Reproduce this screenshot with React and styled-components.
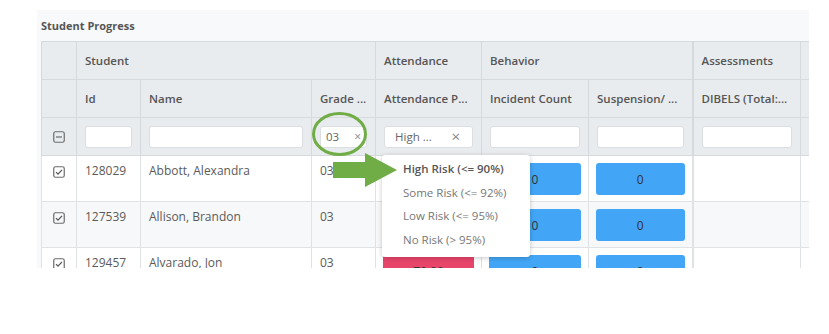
import React from 'react'
import styled, { createGlobalStyle } from 'styled-components'

const Global = createGlobalStyle`
  body {
    margin: 0;
    background: #fff;
    font-family: "Open Sans", "Liberation Sans", sans-serif;
    color: #555;
  }
`

const Page = styled.div`
  width: 829px;
  height: 334px;
  padding: 10px 0 0 37px;
  box-sizing: border-box;
`

const Panel = styled.section`
  width: 772px;
  background: #f8f9fa;
  position: relative;
`

const Title = styled.div`
  height: 31px;
  padding-left: 4px;
  display: flex;
  align-items: center;
  font-size: 11px;
  font-weight: 700;
  color: #555;
`

const TableWrap = styled.div`
  height: 227px;
  margin-left: 4px;
  overflow: hidden;
  position: relative;
`

const Table = styled.table`
  border-collapse: collapse;
  table-layout: fixed;
  width: 810px;
  font-size: 12px;
`

const Th = styled.th`
  height: 38px;
  box-sizing: border-box;
  padding: 0 8px;
  background: #e9ecef;
  border: 1px solid #d6dadd;
  border-right-width: ${p => (p.$group ? '2px' : '1px')};
  text-align: left;
  font-size: 11.5px;
  font-weight: 600;
  color: #555;
  white-space: nowrap;
  overflow: hidden;
`

const FilterCell = styled.td`
  height: 38px;
  box-sizing: border-box;
  padding: 0 8px;
  background: #e9ecef;
  border: 1px solid #d6dadd;
  border-right-width: ${p => (p.$group ? '2px' : '1px')};
  text-align: ${p => (p.$center ? 'center' : 'left')};
`

const Input = styled.div`
  height: 22px;
  box-sizing: border-box;
  background: #fff;
  border: 1px solid #dcdfe2;
  border-radius: 3px;
  display: flex;
  align-items: center;
  justify-content: space-between;
  padding: 0 ${p => (p.$wide ? '12px' : '5px')} 0 ${p => (p.$wide ? '10px' : '5px')};
  font-size: 11.5px;
  color: #666;
`

const Clear = styled.span`
  color: #888;
  font-size: ${p => (p.$big ? '15px' : '12px')};
  line-height: 1;
`

const Row = styled.tr`
  background: ${p => (p.$alt ? '#f7f8f9' : '#fff')};
`

const Td = styled.td`
  height: 46px;
  box-sizing: border-box;
  padding: ${p => (p.$box ? '7px 7px 0' : '6px 8px 0')};
  border: 1px solid #e0e3e6;
  border-right-width: ${p => (p.$group ? '2px' : '1px')};
  vertical-align: top;
  text-align: ${p => (p.$center ? 'center' : 'left')};
  color: #5a5a5a;
  white-space: nowrap;
`

const Score = styled.div`
  height: 32px;
  border-radius: 3px;
  background: ${p => p.$bg};
  display: flex;
  align-items: center;
  justify-content: center;
  color: #333;
  font-size: 12px;
`

const Dropdown = styled.ul`
  position: absolute;
  left: 341px;
  top: 114px;
  width: 148px;
  height: 102px;
  margin: 0;
  padding: 2px 0 0;
  box-sizing: border-box;
  list-style: none;
  background: #fff;
  border-radius: 3px;
  box-shadow: 0 1px 5px rgba(0, 0, 0, 0.22);
  z-index: 3;
`

const Option = styled.li`
  height: 23.5px;
  display: flex;
  align-items: center;
  padding-left: 21px;
  font-size: 11.5px;
  font-weight: ${p => (p.$active ? 600 : 400)};
  color: ${p => (p.$active ? '#555' : '#777')};
`

const Annotation = styled.svg`
  position: absolute;
  left: 0;
  top: 0;
  pointer-events: none;
  z-index: 4;
`

const CheckBox = ({ minus }) => (
  <svg width="12" height="12" viewBox="0 0 12 12" style={{ display: 'block', margin: '0 auto' }}>
    <rect x="0.75" y="0.75" width="10.5" height="10.5" rx="1.8" fill="none" stroke="#6b6b6b" strokeWidth="1.2" />
    {minus ? (
      <path d="M3 6h6" stroke="#6b6b6b" strokeWidth="1.2" />
    ) : (
      <path d="M3 6.2l2 2 4-4.4" fill="none" stroke="#555" strokeWidth="1.2" />
    )}
  </svg>
)

const students = [
  { id: '128029', name: 'Abbott, Alexandra', grade: '03', att: '95.00', attBg: '#42a5f5' },
  { id: '127539', name: 'Allison, Brandon', grade: '03', att: '96.00', attBg: '#42a5f5' },
  { id: '129457', name: 'Alvarado, Jon', grade: '03', att: '70.00', attBg: '#e8456b' },
]

const risks = ['High Risk (<= 90%)', 'Some Risk (<= 92%)', 'Low Risk (<= 95%)', 'No Risk (> 95%)']

export default function App() {
  return (
    <Page>
      <Global />
      <Panel>
        <Title>Student Progress</Title>
        <TableWrap>
          <Table>
            <colgroup>
              <col style={{ width: 35 }} />
              <col style={{ width: 64 }} />
              <col style={{ width: 171 }} />
              <col style={{ width: 64 }} />
              <col style={{ width: 106 }} />
              <col style={{ width: 107 }} />
              <col style={{ width: 104 }} />
              <col style={{ width: 108 }} />
              <col style={{ width: 51 }} />
            </colgroup>
            <thead>
              <tr>
                <Th />
                <Th colSpan={3}>Student</Th>
                <Th>Attendance</Th>
                <Th colSpan={2} $group>Behavior</Th>
                <Th>Assessments</Th>
                <Th />
              </tr>
              <tr>
                <Th />
                <Th>Id</Th>
                <Th>Name</Th>
                <Th>Grade ...</Th>
                <Th>Attendance P...</Th>
                <Th>Incident Count</Th>
                <Th $group>Suspension/ ...</Th>
                <Th>DIBELS (Total:...</Th>
                <Th />
              </tr>
              <tr>
                <FilterCell $center><CheckBox minus /></FilterCell>
                <FilterCell><Input /></FilterCell>
                <FilterCell><Input /></FilterCell>
                <FilterCell><Input>03<Clear>×</Clear></Input></FilterCell>
                <FilterCell><Input $wide>High ...<Clear $big>×</Clear></Input></FilterCell>
                <FilterCell><Input /></FilterCell>
                <FilterCell $group><Input /></FilterCell>
                <FilterCell><Input /></FilterCell>
                <FilterCell />
              </tr>
            </thead>
            <tbody>
              {students.map((s, i) => (
                <Row key={s.id} $alt={i % 2 === 1}>
                  <Td $center style={{ paddingTop: 10 }}><CheckBox /></Td>
                  <Td>{s.id}</Td>
                  <Td>{s.name}</Td>
                  <Td>{s.grade}</Td>
                  <Td $box><Score $bg={s.attBg}>{s.att}</Score></Td>
                  <Td $box><Score $bg="#42a5f5">0</Score></Td>
                  <Td $box $group><Score $bg="#42a5f5">0</Score></Td>
                  <Td />
                  <Td />
                </Row>
              ))}
            </tbody>
          </Table>
          <Dropdown>
            {risks.map((r, i) => (
              <Option key={r} $active={i === 0}>{r}</Option>
            ))}
          </Dropdown>
          <Annotation width="772" height="227">
            <ellipse cx="298.5" cy="93" rx="26" ry="20.5" fill="none" stroke="#70ad47" strokeWidth="3" />
            <path d="M292 121h32v-9l32 17-32 17v-9h-32z" fill="#70ad47" />
          </Annotation>
        </TableWrap>
      </Panel>
    </Page>
  )
}
